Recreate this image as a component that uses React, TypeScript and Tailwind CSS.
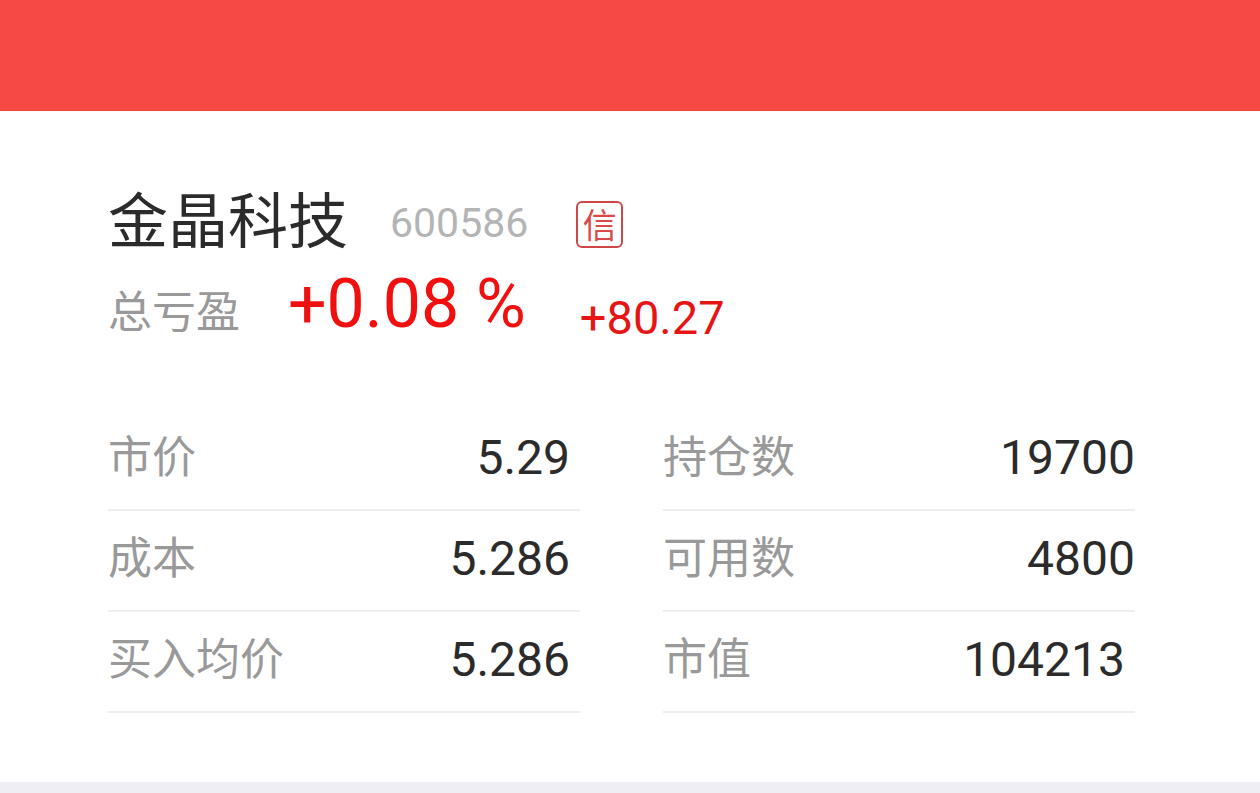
type Row = { label: string; value: string; inset: string };

const LEFT_ROWS: Row[] = [
  { label: "市价", value: "5.29", inset: "pr-[10px]" },
  { label: "成本", value: "5.286", inset: "pr-[10px]" },
  { label: "买入均价", value: "5.286", inset: "pr-[10px]" },
];

const RIGHT_ROWS: Row[] = [
  { label: "持仓数", value: "19700", inset: "pr-0" },
  { label: "可用数", value: "4800", inset: "pr-0" },
  { label: "市值", value: "104213", inset: "pr-[10px]" },
];

export default function App() {
  return (
    <div className="flex min-h-screen flex-col bg-[#efeef4] font-['Roboto','Noto_Sans_CJK_SC',sans-serif]">
      <header className="h-[111px] bg-[#f74944]" />
      <main className="mb-[11px] flex-1 bg-white pt-[76px] pr-[125px] pb-[68px] pl-[108px]">
        <div className="flex h-[72px] items-center">
          <h1 className="text-[60px] leading-[72px] text-[#2b2b2b]">金晶科技</h1>
          <span className="ml-[42px] text-[41px] leading-[72px] text-[#b4b4b4]">
            600586
          </span>
          <span className="mt-0.5 ml-12 flex size-[47px] items-center justify-center rounded-[6px] border-2 border-[#cf4848] pt-1 text-[34px] leading-none text-[#d84a48]">
            信
          </span>
        </div>
        <div className="flex h-[88px] items-end">
          <span className="text-[44px] leading-[68px] text-[#999999]">总亏盈</span>
          <span className="ml-12 text-[68px] leading-[86px] text-[#f11010]">
            +0.08 %
          </span>
          <span className="ml-[54px] text-[47px] leading-[58px] text-[#e61414]">
            +80.27
          </span>
        </div>
        <div className="mt-[63px] grid grid-cols-2 gap-x-[83px]">
          <Column rows={LEFT_ROWS} />
          <Column rows={RIGHT_ROWS} />
        </div>
      </main>
    </div>
  );
}

// ---------------------------------------------------------------------

function Column({ rows }: { rows: Row[] }) {
  return (
    <dl>
      {rows.map((r) => (
        <div
          key={r.label}
          className={`flex h-[101px] items-center justify-between border-b-2 border-[#eeeeee] pb-1 ${r.inset}`}
        >
          <dt className="text-[44px] leading-[64px] text-[#999999]">
            {r.label}
          </dt>
          <dd className="text-[48px] leading-[64px] text-[#2b2b2b]">
            {r.value}
          </dd>
        </div>
      ))}
    </dl>
  );
}
